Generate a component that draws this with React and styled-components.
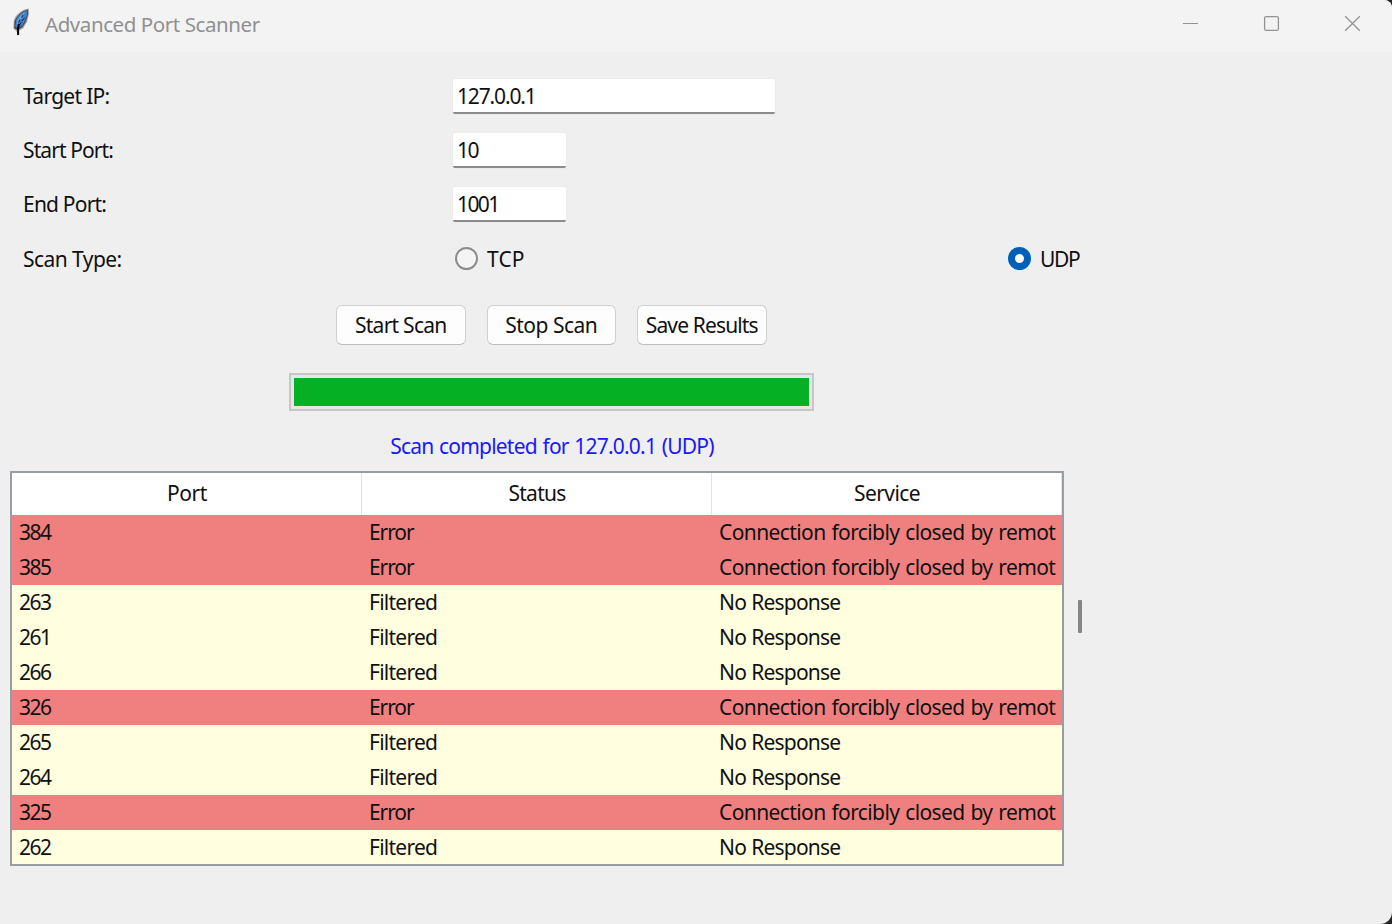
import React from 'react';
import styled, { createGlobalStyle } from 'styled-components';

const GlobalStyle = createGlobalStyle`
  *, *::before, *::after { box-sizing: border-box; }
  body { margin: 0; background: #262626; overflow: hidden; }
`;

const Window = styled.div`
  width: 1392px;
  height: 924px;
  display: flex;
  flex-direction: column;
  overflow: hidden;
  background: #efefef;
  border-radius: 0 8px 12px 0;
  color: #101010;
  font: 21px/28px 'Noto Sans', 'Open Sans', sans-serif;
`;

const TitleBar = styled.header`
  height: 52px;
  flex: none;
  display: flex;
  align-items: flex-start;
  padding-left: 12px;
  background: #f3f3f3;
`;

const AppIcon = styled.svg`
  width: 18px;
  height: 29px;
  margin-top: 8px;
`;

const Title = styled.h1`
  flex: 1;
  margin: 10px 0 0 15px;
  font-size: 20.5px;
  line-height: 28px;
  font-weight: 400;
  letter-spacing: -0.42px;
  color: #909090;
`;

const WindowButtons = styled.div`
  display: flex;
  margin-right: -1px;
`;

const WindowButton = styled.button`
  width: 81px;
  height: 47px;
  padding: 0;
  border: 0;
  background: none;
  display: grid;
  place-items: center;
  svg { width: 17px; height: 17px; display: block; }
`;

const Text = styled.span`
  white-space: nowrap;
  letter-spacing: ${p => p.$track || 0}px;
  word-spacing: ${p => p.$words || 0}px;
`;

const Form = styled.form`
  display: grid;
  grid-template-columns: 430px 555px 1fr;
  grid-template-rows: repeat(4, 54px);
  align-items: center;
  margin: 17px 0 0;
  padding-left: 23px;
`;

const FieldLabel = styled(Text)`
  padding-top: ${p => p.$drop || 0}px;
`;

const Field = styled.div`
  grid-column: 2 / -1;
  width: ${p => p.$width}px;
  height: 35px;
  padding: 3px 4px 0;
  background: #fff;
  border-bottom: 2px solid #8b8b8b;
  border-radius: 2px;
  box-shadow: 0 0 0 1px #ebebeb;
`;

const Radio = styled.label`
  display: flex;
  align-items: center;
  gap: 9px;
  padding-left: ${p => p.$indent || 0}px;
  ${Text} { padding-top: 1px; margin-bottom: -1px; }
`;

const RadioDot = styled.span`
  width: 23px;
  height: 23px;
  flex: none;
  border-radius: 50%;
  border: ${p => (p.$checked ? '7px solid #005fb8' : '2px solid #8c8c8c')};
  background: ${p => (p.$checked ? '#fff' : '#f4f4f4')};
`;

const Actions = styled.div`
  display: flex;
  gap: 21px;
  margin: 20px 0 0 336px;
`;

const ActionButton = styled.button`
  width: 129.5px;
  height: 40px;
  padding: 0;
  border: 1.5px solid #d0d0d0;
  border-bottom-color: #bdbdbd;
  border-radius: 6px;
  background: #fdfdfd;
  color: inherit;
  font: inherit;
`;

const Progress = styled.div`
  width: 525px;
  height: 38px;
  margin: 28px 0 0 289px;
  padding: 3px;
  border: 2px solid #c6c6c6;
  background: #e6e6e6;
`;

const ProgressFill = styled.div`
  height: 100%;
  background: #06b025;
`;

const Message = styled.p`
  width: 1104px;
  margin: 21px 0 0;
  text-align: center;
  color: #1818ff;
`;

const Results = styled.section`
  display: flex;
  align-items: flex-start;
  margin: 11px 0 0 10px;
`;

const Table = styled.div`
  width: 1054px;
  height: 395px;
  overflow: hidden;
  border: 2px solid #979da2;
  background: #fff;
`;

const TableRow = styled.div`
  display: grid;
  grid-template-columns: repeat(3, 350px);
  height: 35px;
  background: ${p => (p.$error ? '#f08080' : '#ffffe0')};
`;

const HeaderRow = styled(TableRow)`
  height: 42px;
  background: #fff;
`;

const HeaderCell = styled.div`
  padding: 6px 0 0 1px;
  text-align: center;
  border-right: 1px solid #e3e3e3;
`;

const Cell = styled.div`
  margin: 0 6px 0 7px;
  padding-top: 3px;
  overflow: hidden;
  white-space: nowrap;
`;

const ScrollThumb = styled.div`
  width: 4px;
  height: 33px;
  margin: 129px 0 0 14px;
  border-radius: 1px;
  background: #858585;
`;

const rows = [
  ['384', true], ['385', true], ['263', false], ['261', false], ['266', false],
  ['326', true], ['265', false], ['264', false], ['325', true], ['262', false],
];

function Feather() {
  return (
    <AppIcon viewBox="0 0 18 29">
      <path d="M16.800 0.600C10.500 1.200 3.600 6.500 1.800 12.500L1.400 20.500L4.600 23.500L6 28L7.200 22.500L11 20.500L15 14L17 6Z" fill="#a2a4a4" />
      <path d="M15.800 1.400C10 2.800 4.400 8 2.600 13.500L2.200 20L5.500 22L10.600 19L14.200 12.500L16 6Z" fill="#404448" />
      <path d="M15 2.400C11 3.500 6.500 7 4.200 11.500L3.200 19L6 20L10.400 17.500L13.500 11.500L15.200 6Z" fill="#3f7fce" />
      <path d="M13.500 3.500L8.500 7.500L5.500 12.500L4.700 17L8 12.500Z" fill="#6aa7e8" />
      <path d="M11 7L9.500 9.500M12.500 10L9.800 13M8 11.500L6.600 14.500M9.500 14L7.500 17" fill="none" stroke="#0c1b33" strokeWidth="1" />
      <path d="M7 16L6.100 20V27" fill="none" stroke="#050505" strokeWidth="2" />
    </AppIcon>
  );
}

export default function App() {
  return (
    <>
      <GlobalStyle />
      <Window>
        <TitleBar>
          <Feather />
          <Title>Advanced Port Scanner</Title>
          <WindowButtons>
            <WindowButton aria-label="Minimize">
              <svg viewBox="0 0 17 17"><path d="M1 8.500H16" stroke="#929292" /></svg>
            </WindowButton>
            <WindowButton aria-label="Maximize">
              <svg viewBox="0 0 17 17"><rect x="1.600" y="1.600" width="13.800" height="13.800" rx="1.500" fill="none" stroke="#929292" strokeWidth="1.300" /></svg>
            </WindowButton>
            <WindowButton aria-label="Close">
              <svg viewBox="0 0 17 17"><path d="M1.200 1.200L15.800 15.800M15.800 1.200L1.200 15.800" stroke="#929292" strokeWidth="1.300" /></svg>
            </WindowButton>
          </WindowButtons>
        </TitleBar>

        <Form>
          <FieldLabel $track={-0.7}>Target IP:</FieldLabel>
          <Field $width={322}><Text $track={-1.15}>127.0.0.1</Text></Field>
          <FieldLabel $track={-0.9}>Start Port:</FieldLabel>
          <Field $width={113}><Text $track={-1.5}>10</Text></Field>
          <FieldLabel $track={-0.8}>End Port:</FieldLabel>
          <Field $width={113}><Text $track={-1.6}>1001</Text></Field>
          <FieldLabel $drop={2} $track={-0.55}>Scan Type:</FieldLabel>
          <Radio $indent={2}><RadioDot /><Text $track={0.15}>TCP</Text></Radio>
          <Radio><RadioDot $checked /><Text $track={-1.4}>UDP</Text></Radio>
        </Form>

        <Actions>
          <ActionButton><Text $track={-0.75}>Start Scan</Text></ActionButton>
          <ActionButton><Text $track={-0.5}>Stop Scan</Text></ActionButton>
          <ActionButton><Text $track={-0.85}>Save Results</Text></ActionButton>
        </Actions>

        <Progress><ProgressFill /></Progress>
        <Message><Text $track={-0.8} $words={1}>Scan completed for 127.0.0.1 (UDP)</Text></Message>

        <Results>
          <Table>
            <HeaderRow>
              <HeaderCell><Text $track={-0.4}>Port</Text></HeaderCell>
              <HeaderCell><Text $track={-0.75}>Status</Text></HeaderCell>
              <HeaderCell><Text $track={-0.6}>Service</Text></HeaderCell>
            </HeaderRow>
            {rows.map(([port, error]) => (
              <TableRow key={port} $error={error}>
                <Cell><Text $track={-1.5}>{port}</Text></Cell>
                <Cell><Text $track={error ? -1.1 : -0.75}>{error ? 'Error' : 'Filtered'}</Text></Cell>
                <Cell>
                  <Text $track={error ? -0.6 : -0.8} $words={error ? 1 : 0.5}>
                    {error ? 'Connection forcibly closed by remot' : 'No Response'}
                  </Text>
                </Cell>
              </TableRow>
            ))}
          </Table>
          <ScrollThumb />
        </Results>
      </Window>
    </>
  );
}
